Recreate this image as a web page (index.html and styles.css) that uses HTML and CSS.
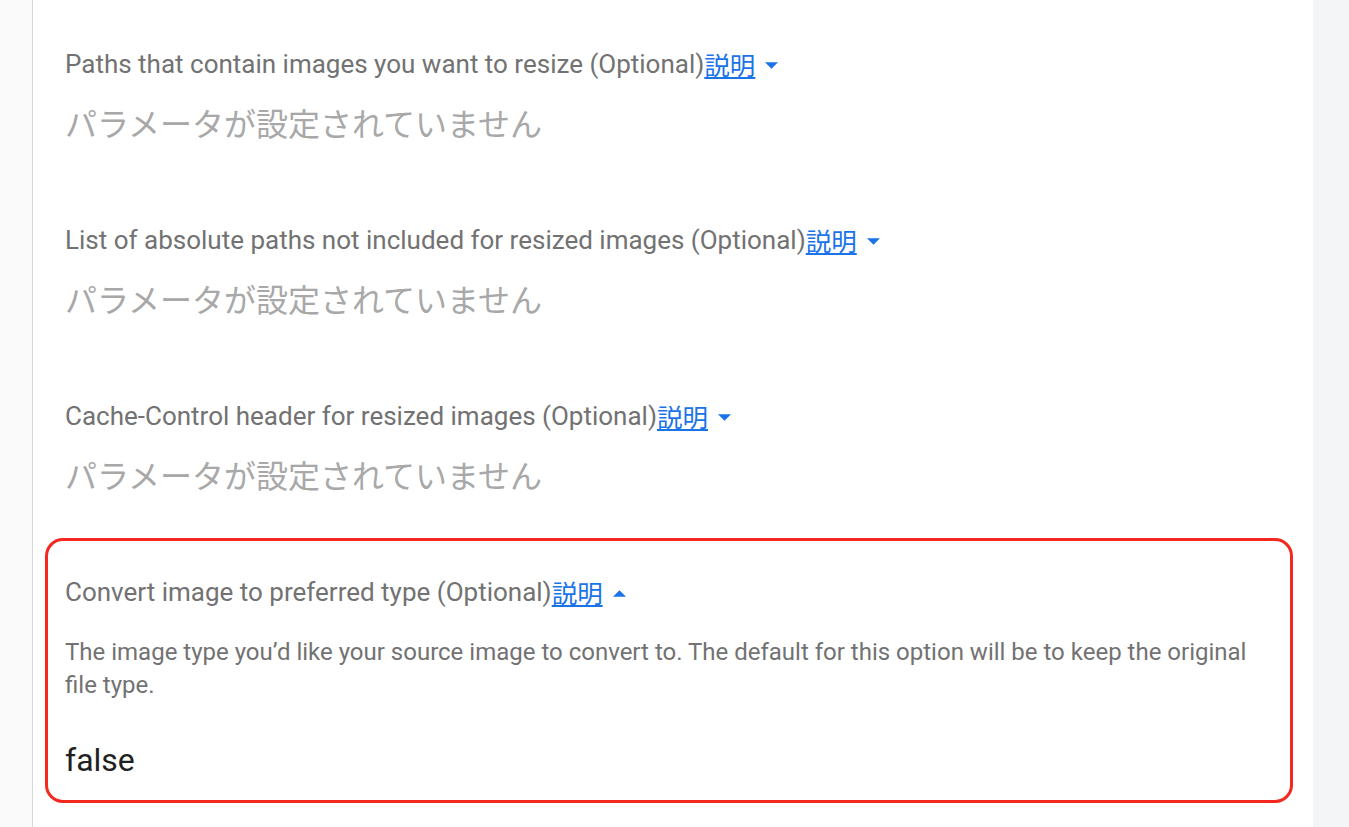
FILE: index.html
```html
<!DOCTYPE html>
<html lang="ja">
<head>
<meta charset="utf-8">
<link rel="stylesheet" href="styles.css">
</head>
<body>
<div class="page">
  <div class="gutter"></div>
  <main class="card">
    <section class="param">
      <div class="label">Paths that contain images you want to resize (Optional)<a class="help" href="#">説明</a><svg class="caret" viewBox="0 0 10 5" width="13" height="7"><path d="M0 0 L10 0 L5 5 Z"/></svg></div>
      <div class="empty">パラメータが設定されていません</div>
    </section>
    <section class="param">
      <div class="label">List of absolute paths not included for resized images (Optional)<a class="help" href="#">説明</a><svg class="caret" viewBox="0 0 10 5" width="13" height="7"><path d="M0 0 L10 0 L5 5 Z"/></svg></div>
      <div class="empty">パラメータが設定されていません</div>
    </section>
    <section class="param">
      <div class="label">Cache-Control header for resized images (Optional)<a class="help" href="#">説明</a><svg class="caret" viewBox="0 0 10 5" width="13" height="7"><path d="M0 0 L10 0 L5 5 Z"/></svg></div>
      <div class="empty">パラメータが設定されていません</div>
    </section>
    <section class="param highlighted">
      <div class="label">Convert image to preferred type (Optional)<a class="help" href="#">説明</a><svg class="caret" viewBox="0 0 10 5" width="13" height="7"><path d="M0 5 L10 5 L5 0 Z"/></svg></div>
      <p class="desc">The image type you’d like your source image to convert to. The default for this option will be to keep the original file type.</p>
      <div class="value">false</div>
    </section>
  </main>
  <div class="side"></div>
</div>
</body>
</html>
```

FILE: styles.css
```css
html, body {
  margin: 0;
  padding: 0;
  height: 100%;
}
body {
  font-family: Roboto, "Noto Sans CJK JP", sans-serif;
  background: #f4f5f7;
  overflow: hidden;
}
.page {
  display: flex;
  height: 827px;
}
.gutter {
  width: 32px;
  background: #fafafa;
  border-right: 1px solid #dcdcdc;
  flex: none;
}
.card {
  width: 1280px;
  flex: none;
  background: #fff;
  box-shadow: 1px 0 2px rgba(0,0,0,0.18);
  padding: 40px 0 0 12px;
  box-sizing: border-box;
}
.side {
  flex: 1;
  background: #f4f5f7;
}
.param {
  padding: 0 20px;
  margin-right: 20px;
  height: 176px;
  box-sizing: border-box;
}
.label {
  font-size: 26px;
  color: #727272;
  line-height: 48px;
  display: flex;
  align-items: center;
}
.help {
  color: #1a73e8;
  text-decoration: underline;
  text-underline-offset: 2px;
  font-family: "Noto Sans CJK JP", sans-serif;
  font-size: 25.5px;
}
.caret {
  fill: #1a73e8;
  margin-left: 10px;
  margin-top: 2px;
}
.empty {
  font-family: "Noto Sans CJK JP", sans-serif;
  font-size: 32px;
  color: #a8a8a8;
  line-height: 60px;
  margin-top: 4px;
}
.highlighted {
  border: 3px solid #f5281f;
  border-radius: 18px;
  height: auto;
  margin-top: -30px;
  padding: 27px 17px 21px;
}
.desc {
  margin: 20px 0 0;
  font-size: 24px;
  line-height: 33px;
  color: #727272;
  max-width: 1200px;
}
.value {
  margin-top: 39px;
  font-size: 32px;
  line-height: 38px;
  color: #212121;
}
```
